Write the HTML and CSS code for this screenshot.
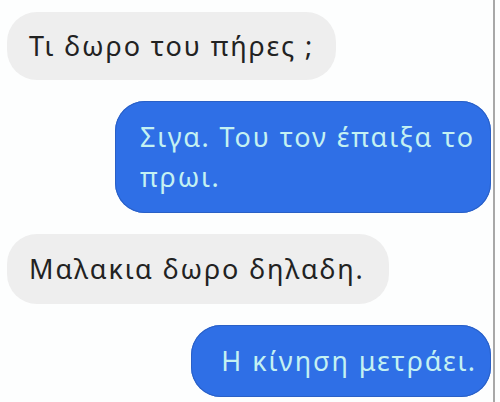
FILE: index.html
```html
<!DOCTYPE html>
<html lang="el">
<head>
    <meta charset="UTF-8">
    <meta name="viewport" content="width=device-width, initial-scale=1.0">
    <title>Chat</title>
    <link rel="stylesheet" href="styles.css">
</head>
<body>
    <div class="chat">
        <div class="msg in">Τι δωρο του πήρες ;</div>
        <div class="msg out">Σιγα. Του τον έπαιξα το πρωι.</div>
        <div class="msg in tall">Μαλακια δωρο δηλαδη.</div>
        <div class="msg out">Η κίνηση μετράει.</div>
    </div>
</body>
</html>
```

FILE: styles.css
```css
body {
    margin: 0;
    background-color: #fdfefe;
    font-family: "Noto Sans", sans-serif;
}
.chat {
    width: 495px;
    height: 402px;
    box-sizing: border-box;
    border-right: 2px solid #a8a8a8;
    display: flex;
    flex-direction: column;
    gap: 21px;
    padding: 12px 2px 0 7px;
}
.msg {
    box-sizing: border-box;
    padding: 14px 22px;
    font-size: 27px;
    line-height: 40px;
    letter-spacing: 1.9px;
    border-radius: 30px;
}
.in {
    align-self: flex-start;
    max-width: 420px;
    background-color: #eeeeee;
    color: #222;
}
.tall {
    padding: 15px 24px 15px 22px;
}
.out {
    align-self: flex-end;
    max-width: 376px;
    background-color: #2f6fe6;
    color: #c4f1f2;
    box-shadow: inset 0 0 0 1px #2a60c6;
    padding: 16px 14px 16px 25px;
}
.out:last-child {
    padding-left: 30px;
}
```
